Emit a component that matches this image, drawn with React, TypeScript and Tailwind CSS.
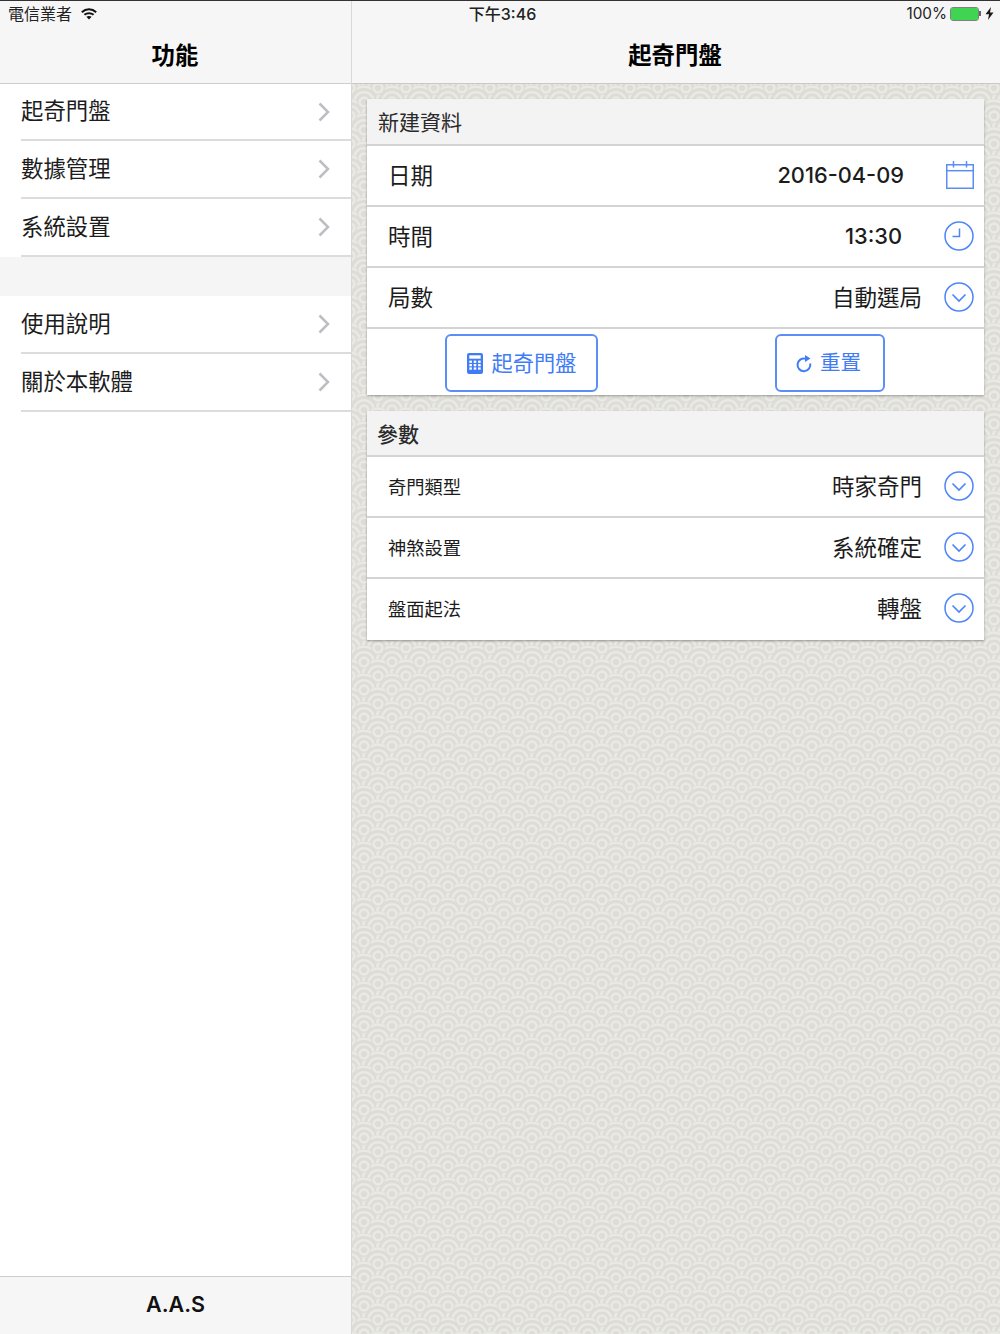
import React from "react";

const Chevron = () => (
  <svg width="12" height="20" viewBox="0 0 12 20" fill="none" className="shrink-0">
    <path d="M1.5 1.5 L10 10 L1.5 18.5" stroke="#bdbdc3" strokeWidth="2.5" />
  </svg>
);

const Wifi = () => (
  <svg width="16" height="12" viewBox="0 0 16 12" fill="none">
    <path d="M0.8 4.2 C5 0.4 11 0.4 15.2 4.2" stroke="#111" strokeWidth="2" />
    <path d="M3.4 6.8 C6 4.6 10 4.6 12.6 6.8" stroke="#111" strokeWidth="2" />
    <path d="M5.4 8.8 C7 7.6 9 7.6 10.6 8.8 L8 11.6 Z" fill="#111" />
  </svg>
);

const DownCircle = () => (
  <svg width="30" height="30" viewBox="0 0 30 30" fill="none" className="shrink-0">
    <circle cx="15" cy="15" r="14" stroke="#4f86f7" strokeWidth="1.5" />
    <path d="M8.5 12.5 L15 19 L21.5 12.5" stroke="#4f86f7" strokeWidth="1.7" />
  </svg>
);

const Clock = () => (
  <svg width="30" height="30" viewBox="0 0 30 30" fill="none" className="shrink-0">
    <circle cx="15" cy="15" r="14" stroke="#4f86f7" strokeWidth="1.5" />
    <path d="M15.5 7.5 V15.5 H8.5" stroke="#4f86f7" strokeWidth="1.5" />
  </svg>
);

const Calendar = () => (
  <svg width="28" height="28" viewBox="0 0 28 28" fill="none" className="shrink-0">
    <path d="M0.75 3.7 H27.25 V27.25 H0.75 Z" stroke="#5b8ef7" strokeWidth="1.5" />
    <path d="M0.75 9.7 H27.25" stroke="#5b8ef7" strokeWidth="1.5" />
    <path d="M7.5 0 V6.5 M20.5 0 V6.5" stroke="#5b8ef7" strokeWidth="1.5" />
  </svg>
);

const Calculator = () => (
  <svg width="16" height="21" viewBox="0 0 16 21" className="shrink-0">
    <rect width="16" height="21" rx="2" fill="#3f7cf5" />
    <rect x="2.3" y="2.3" width="11.4" height="3.4" fill="#fff" />
    {[7.6, 11, 14.4].map((y) =>
      [2.3, 6.7, 11.1].map((x) => <rect key={`${x}-${y}`} x={x} y={y} width="2.6" height="2.3" fill="#fff" />)
    )}
  </svg>
);

const Refresh = () => (
  <svg width="16" height="18" viewBox="0 0 16 18" fill="none" className="shrink-0">
    <path d="M9.5 3.6 A6.4 6.4 0 1 0 14.2 8.5" stroke="#3f7cf5" strokeWidth="2" />
    <path d="M9 0 L14.5 3.5 L9 7 Z" fill="#3f7cf5" />
  </svg>
);

const motifs: [number, number][] = [];
for (let j = -3; j <= 5; j++) {
  for (let i = -2; i <= 3; i++) {
    motifs.push([i * 28 + (Math.abs(j) % 2) * 14, j * 14]);
  }
}

const Pattern = () => (
  <svg className="absolute inset-0 w-full h-full" aria-hidden="true">
    <defs>
      <pattern id="rings" width="28" height="28" patternUnits="userSpaceOnUse" patternTransform="translate(-2 4)">
        <rect width="28" height="28" fill="#dddcd6" />
        {motifs.map(([x, y], i) => (
          <g key={i}>
            <circle cx={x} cy={y} r="17" fill="#dddcd6" />
            <g fill="none" stroke="#eaeae5" strokeWidth="2.6">
              <circle cx={x} cy={y} r="9.8" />
              <circle cx={x} cy={y} r="15.2" />
            </g>
          </g>
        ))}
        {motifs.map(([x, y], i) => (
          <g key={i}>
            <circle cx={x} cy={y} r="7" fill="#dddcd6" />
            <circle cx={x} cy={y} r="4.4" fill="none" stroke="#eaeae5" strokeWidth="2.6" />
          </g>
        ))}
      </pattern>
    </defs>
    <rect width="100%" height="100%" fill="url(#rings)" />
  </svg>
);

const MenuRow = ({ label, first }: { label: string; first?: boolean }) => (
  <div className={`${first ? "h-[57px]" : "h-[58px]"} pl-[21px] bg-white`}>
    <div className="h-full flex items-center justify-between pr-[21px] border-b-[2px] border-[#dcdcdc]">
      <span className="text-[22.4px] text-[#1c1c1c] leading-none">{label}</span>
      <Chevron />
    </div>
  </div>
);

const Row = ({
  label,
  value,
  icon,
  small,
  valueClass,
}: {
  label: string;
  value: string;
  icon: React.ReactNode;
  small?: boolean;
  valueClass?: string;
}) => (
  <div className="h-[61px] flex items-center pl-[21px] pr-[10px] border-b-[2px] border-[#d4d4d4] last:border-transparent">
    <span className={`text-[#1c1c1c] leading-none pt-[2px] ${small ? "text-[18.3px]" : "text-[22.5px]"}`}>{label}</span>
    <span className={`ml-auto text-[#1c1c1c] leading-none ${valueClass ?? "text-[22.5px] mr-[22px] pt-[2px]"}`}>{value}</span>
    <span className="w-[30px] flex justify-end pb-[2px]">{icon}</span>
  </div>
);

const CardHeader = ({ title, second }: { title: string; second?: boolean }) => (
  <div
    className={`flex items-center bg-[#f3f3f3] border-b-[2px] border-[#d4d4d4] ${
      second ? "h-[46px] pl-[10px] pt-[3px]" : "h-[47px] pl-[11px] pt-[1px]"
    }`}
  >
    <span className={`text-[21px] text-[#2a2a2a] leading-none ${second ? "font-medium" : ""}`}>{title}</span>
  </div>
);

export default function App() {
  return (
    <div className="relative w-[1000px] h-[1334px] overflow-hidden flex bg-white font-['Inter','Noto_Sans_CJK_TC',sans-serif] border-t border-[#333]">
      {/* status bar */}
      <div className="absolute z-10 top-0 left-0 right-0 h-[25px] flex items-center justify-between pl-[8px] pr-[6px] text-[16px] text-[#222]">
        <div className="flex items-center gap-[9px] w-[200px]">
          <span className="text-[16px]">電信業者</span>
          <Wifi />
        </div>
        <span className="text-[16px] font-medium ml-[3px]">下午3:46</span>
        <div className="flex items-center justify-end gap-[4px] w-[200px]">
          <span className="text-[15.3px] pt-[1px] mr-[-1px]">100%</span>
          <div className="flex items-center">
            <div className="w-[29px] h-[14px] rounded-[3px] border-[1.5px] border-[#808080]">
              <div className="w-full h-full rounded-[1px] bg-[#3fd452]" />
            </div>
            <div className="w-[2px] h-[5px] bg-[#666]" />
          </div>
          <svg width="9" height="13" viewBox="0 0 9 13">
            <path d="M6 0 L0.5 7.2 H4 L3 13 L8.5 5.4 H5 Z" fill="#1a1a1a" />
          </svg>
        </div>
      </div>

      {/* sidebar */}
      <aside className="w-[352px] shrink-0 flex flex-col border-r border-[#d8d8d8] bg-white">
        <header className="h-[83px] shrink-0 pt-[27px] flex items-center justify-center bg-[#f6f6f6] border-b-[1.5px] border-[#cfcfcf]">
          <span className="text-[23.4px] font-bold text-black leading-none pr-[1px]">功能</span>
        </header>
        <MenuRow first label="起奇門盤" />
        <MenuRow label="數據管理" />
        <MenuRow label="系統設置" />
        <div className="h-[39px] bg-[#f5f5f5]" />
        <MenuRow label="使用說明" />
        <MenuRow label="關於本軟體" />
        <div className="flex-1" />
        <footer className="h-[58px] pb-[2px] flex items-center justify-center bg-[#f6f6f6] border-t border-[#cfcfcf]">
          <span className="text-[21.5px] font-semibold text-[#111] leading-none">A.A.S</span>
        </footer>
      </aside>

      {/* main */}
      <main className="flex-1 flex flex-col">
        <header className="h-[83px] shrink-0 pt-[27px] flex items-center justify-center bg-[#f6f6f6] border-b-[1.5px] border-[#c8c8c8]">
          <span className="text-[23.4px] font-bold text-black leading-none pr-[2px]">起奇門盤</span>
        </header>
        <div className="relative flex-1">
          <Pattern />
          <div className="relative pl-[15px] pr-[16px] pt-[15px] flex flex-col gap-[16px]">
            <section className="bg-white shadow-[0_1px_2px_rgba(0,0,0,0.35)]">
              <CardHeader title="新建資料" />
              <Row label="日期" value="2016-04-09" icon={<Calendar />} valueClass="text-[21.8px] font-medium mr-[40px] pt-[1px]" />
              <Row label="時間" value="13:30" icon={<Clock />} valueClass="text-[21.8px] font-medium mr-[42px] pt-[1px]" />
              <Row label="局數" value="自動選局" icon={<DownCircle />} />
              <div className="h-[66px] flex items-center pl-[78px] pt-[1px]">
                <button className="w-[153px] h-[58px] pt-[2px] flex items-center justify-center gap-[9px] rounded-[6px] border-[2px] border-[#5b8ef7] bg-white text-[#3f7cf5] text-[21.2px]">
                  <Calculator />
                  <span>起奇門盤</span>
                </button>
                <button className="ml-[177px] w-[110px] h-[58px] pt-[2px] pr-[3px] flex items-center justify-center gap-[8px] rounded-[6px] border-[2px] border-[#5b8ef7] bg-white text-[#3f7cf5] text-[20.5px]">
                  <Refresh />
                  <span>重置</span>
                </button>
              </div>
            </section>
            <section className="bg-white shadow-[0_1px_2px_rgba(0,0,0,0.35)]">
              <CardHeader title="參數" second />
              <Row small label="奇門類型" value="時家奇門" icon={<DownCircle />} />
              <Row small label="神煞設置" value="系統確定" icon={<DownCircle />} />
              <Row small label="盤面起法" value="轉盤" icon={<DownCircle />} />
            </section>
          </div>
        </div>
      </main>
    </div>
  );
}
